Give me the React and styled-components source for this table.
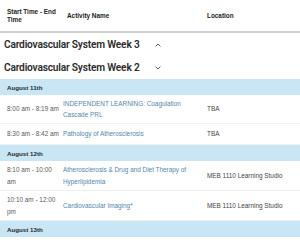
import React from "react";
import styled, { createGlobalStyle } from "styled-components";

const Global = createGlobalStyle`
  html, body { margin: 0; padding: 0; background: #fff; }
  body { font-family: "Liberation Sans", Arial, sans-serif; color: #333; }
`;

const Page = styled.div`
  width: 300px;
  height: 240px;
  overflow: hidden;
`;

const Grid = styled.div`
  display: grid;
  grid-template-columns: 56px 144px 1fr;
  padding: 0 0 0 7px;
  align-items: center;
`;

const HeaderRow = styled(Grid)`
  height: 31px;
  border-bottom: 2px solid #cfcfcf;
  font-size: 6.4px;
  font-weight: 700;
  color: #222;
  line-height: 7.5px;
`;

const HeadCell = styled.div`
  padding-left: ${(p) => p.$indent || 0}px;
`;

const Week = styled.div`
  display: flex;
  align-items: center;
  height: 23px;
  padding-left: 4px;
  font-family: Roboto, "Liberation Sans", sans-serif;
  font-size: 10.2px;
  font-weight: 600;
  letter-spacing: -0.2px;
  color: #2b2b2b;
  white-space: nowrap;
`;

const WeekTitle = styled.span`
  width: 151px;
`;

const Chevron = styled.svg`
  width: 6px;
  height: 4px;
`;

const Day = styled.div`
  background: #c9e6f4;
  height: 16px;
  display: flex;
  align-items: center;
  padding-left: 7px;
  font-size: 6.2px;
  font-weight: 700;
  color: #1c2a33;
`;

const Row = styled(Grid)`
  min-height: ${(p) => p.$h}px;
  border-bottom: 1px solid #eef1f3;
  font-size: 6.4px;
  line-height: 11.5px;
  color: #5a5a5a;
`;

const Time = styled.div`
  padding-right: 4px;
`;

const Link = styled.a`
  color: #5286ab;
  text-decoration: none;
  padding-right: 6px;
`;

const Loc = styled.div`
  color: #444;
`;

const ChevronIcon = ({ up }) => (
  <Chevron viewBox="0 0 6 4">
    <path
      d={up ? "M0.6 3.4 L3 1 L5.4 3.4" : "M0.6 0.6 L3 3 L5.4 0.6"}
      fill="none"
      stroke="#444"
      strokeWidth="0.9"
    />
  </Chevron>
);

const schedule = [
  {
    day: "August 11th",
    rows: [
      { time: "8:00 am - 8:19 am", title: "INDEPENDENT LEARNING: Coagulation Cascade PRL", loc: "TBA", h: 28 },
      { time: "8:30 am - 8:42 am", title: "Pathology of Atherosclerosis", loc: "TBA", h: 20 },
    ],
  },
  {
    day: "August 12th",
    rows: [
      { time: "8:10 am - 10:00 am", title: "Atherosclerosis & Drug and Diet Therapy of Hyperlipidemia", loc: "MEB 1110 Learning Studio", h: 29 },
      { time: "10:10 am - 12:00 pm", title: "Cardiovascular Imaging*", loc: "MEB 1110 Learning Studio", h: 29 },
    ],
  },
  {
    day: "August 13th",
    rows: [
      { time: "8:10 am - 9:00 am", title: "Antithrombotic Treatments for CAD", loc: "MEB 2140 - Auditorium", h: 14 },
    ],
  },
];

export default function App() {
  return (
    <Page>
      <Global />
      <HeaderRow>
        <HeadCell>Start Time - End Time</HeadCell>
        <HeadCell $indent={4}>Activity Name</HeadCell>
        <HeadCell>Location</HeadCell>
      </HeaderRow>
      <Week>
        <WeekTitle>Cardiovascular System Week 3</WeekTitle>
        <ChevronIcon up />
      </Week>
      <Week>
        <WeekTitle>Cardiovascular System Week 2</WeekTitle>
        <ChevronIcon />
      </Week>
      {schedule.map((d) => (
        <React.Fragment key={d.day}>
          <Day>{d.day}</Day>
          {d.rows.map((r) => (
            <Row key={r.time} $h={r.h}>
              <Time>{r.time}</Time>
              <Link href="#">{r.title}</Link>
              <Loc>{r.loc}</Loc>
            </Row>
          ))}
        </React.Fragment>
      ))}
    </Page>
  );
}
